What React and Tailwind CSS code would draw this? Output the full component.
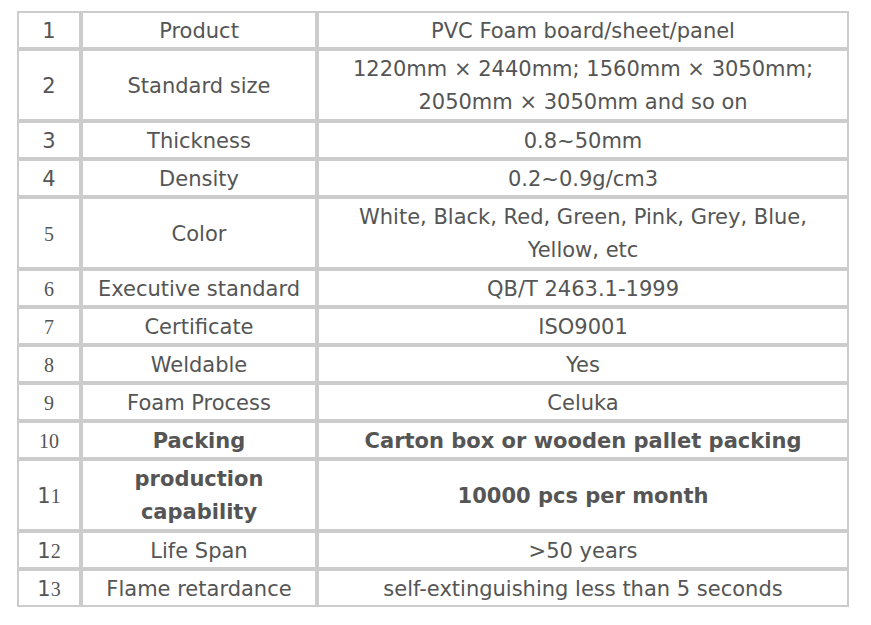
import React from "react";

const sans = { fontFamily: '"DejaVu Sans", Verdana, sans-serif' };

const S = ({ children }) => <span className="font-['DejaVu_Sans',sans-serif] text-[21px]">{children}</span>;
const R = ({ children }) => <span className="font-['Liberation_Serif',serif] text-[20px]">{children}</span>;

const rows = [
  { n: <S>1</S>, a: "Product", b: "PVC Foam board/sheet/panel" },
  { n: <S>2</S>, a: "Standard size", b: <>1220mm × 2440mm; 1560mm × 3050mm;<br />2050mm × 3050mm and so on</>, two: true },
  { n: <S>3</S>, a: "Thickness", b: "0.8~50mm" },
  { n: <S>4</S>, a: "Density", b: "0.2~0.9g/cm3" },
  { n: <R>5</R>, a: "Color", b: <>White, Black, Red, Green, Pink, Grey, Blue,<br />Yellow, etc</>, two: true },
  { n: <R>6</R>, a: "Executive standard", b: "QB/T 2463.1-1999" },
  { n: <R>7</R>, a: "Certificate", b: "ISO9001" },
  { n: <R>8</R>, a: "Weldable", b: "Yes" },
  { n: <R>9</R>, a: "Foam Process", b: "Celuka" },
  { n: <R>10</R>, a: "Packing", b: "Carton box or wooden pallet packing", bold: true },
  { n: <><S>1</S><R>1</R></>, a: <>production<br />capability</>, b: "10000 pcs per month", bold: true, two: true },
  { n: <><S>1</S><R>2</R></>, a: "Life Span", b: ">50 years" },
  { n: <><S>1</S><R>3</R></>, a: "Flame retardance", b: "self-extinguishing less than 5 seconds" },
];

export default function App() {
  return (
    <div className="w-[871px] h-[625px] bg-white pl-[17px] pt-[11px]">
      <div
        className="grid grid-cols-[64px_236px_532px] w-[832px] text-[21px] text-[#555]"
        style={sans}
      >
        {rows.map((r, i) => {
          const lh = r.two ? "leading-[33px]" : "leading-[32px]";
          const base = "border-2 border-[#cccccc] pt-[2px] flex items-center justify-center text-center " + lh;
          return (
            <React.Fragment key={i}>
              <div className={base}>{r.n}</div>
              <div className={base + (r.bold ? " font-bold" : "")}>
                <span>{r.a}</span>
              </div>
              <div className={base + (r.bold ? " font-bold" : "")}>
                <span>{r.b}</span>
              </div>
            </React.Fragment>
          );
        })}
      </div>
    </div>
  );
}
